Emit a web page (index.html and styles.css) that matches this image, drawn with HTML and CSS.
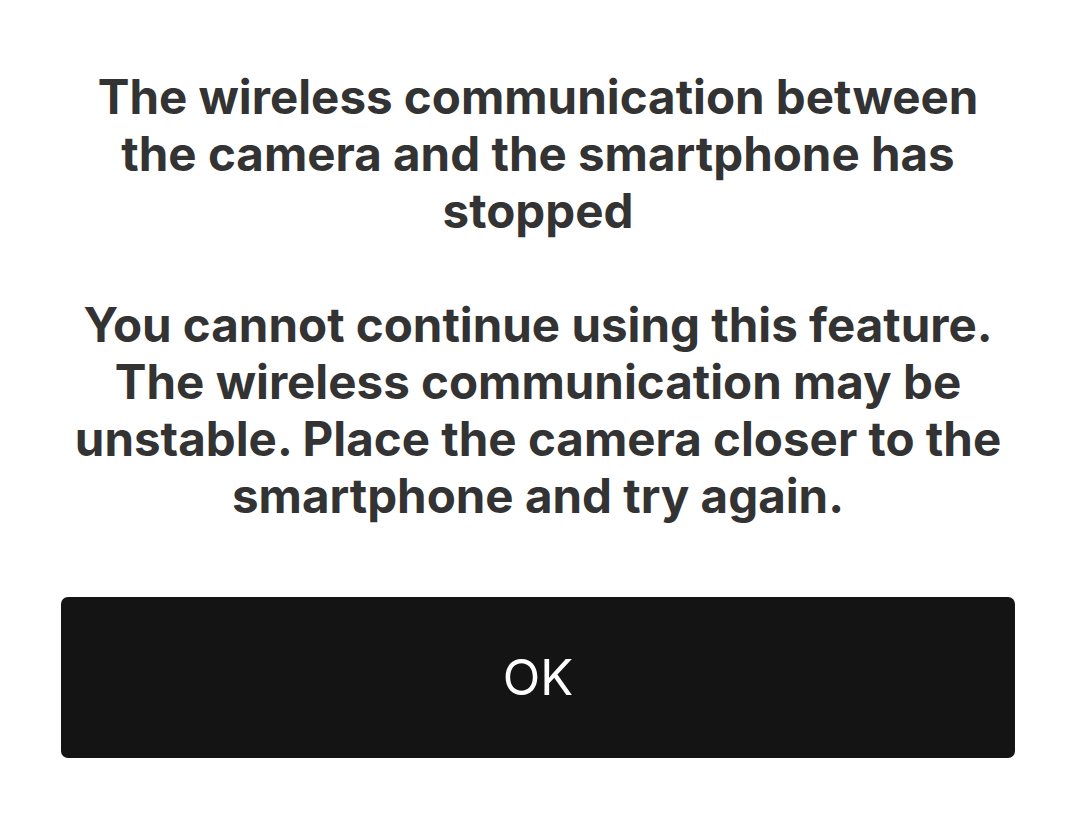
FILE: index.html
```html
<!DOCTYPE html>
<html lang="en">
<head>
    <meta charset="UTF-8">
    <meta name="viewport" content="width=device-width, initial-scale=1.0">
    <title>Connection stopped</title>
    <link rel="stylesheet" href="styles.css">
</head>
<body>
    <div class="dialog">
        <p class="message">
            The wireless communication between the camera and the smartphone has stopped
        </p>
        <p class="message">
            You cannot continue using this feature. The wireless communication may be unstable. Place the camera closer to the smartphone and try again.
        </p>
        <button class="ok-button">OK</button>
    </div>
</body>
</html>
```

FILE: styles.css
```css
body {
    margin: 0;
    background: #ffffff;
    font-family: Inter, "Noto Sans", sans-serif;
}
.dialog {
    padding: 68px 71px 0 61px;
}
.message {
    margin: 0 0 57px 0;
    font-size: 47.5px;
    line-height: 57px;
    font-weight: 700;
    color: #333333;
    text-align: center;
}
.message:last-of-type {
    margin-bottom: 73px;
}
.ok-button {
    display: block;
    width: 100%;
    height: 161px;
    background-color: #141414;
    color: #ffffff;
    border: none;
    border-radius: 7px;
    font-family: Inter, "Noto Sans", sans-serif;
    font-size: 49px;
    font-weight: 400;
}
```
